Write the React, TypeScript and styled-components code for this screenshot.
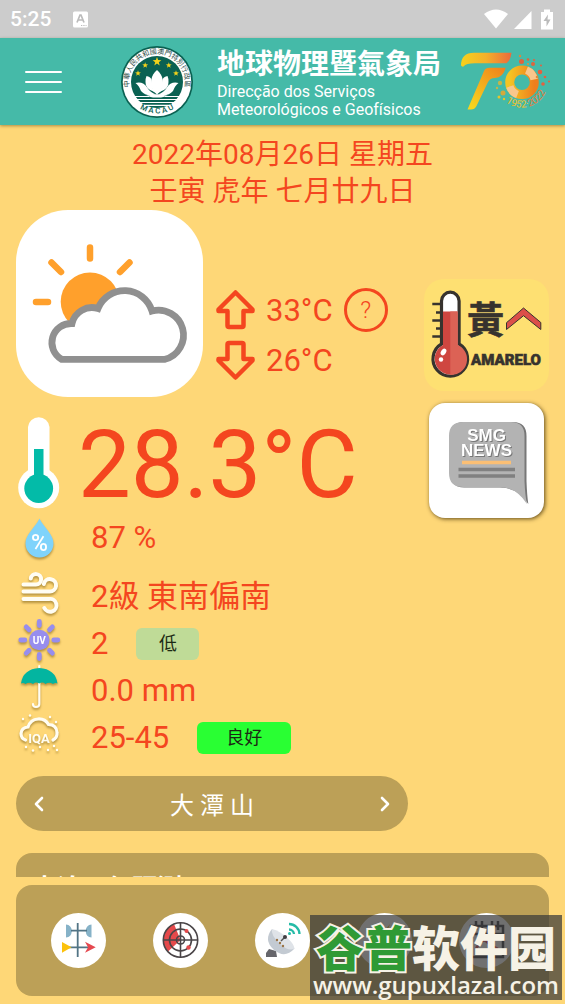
import React from "react";
import styled, { createGlobalStyle } from "styled-components";

const sans = `Roboto, "Noto Sans CJK TC", sans-serif`;

const palette = {
  teal: "#45baa8",
  sand: "#fed777",
  brown: "#bca057",
  accent: "#f4461f",
};

const GlobalStyle = createGlobalStyle`
  * { box-sizing: border-box; }
  body { margin: 0; background: ${palette.sand}; font-family: ${sans}; }
  button { font-family: inherit; border: 0; padding: 0; margin: 0; background: none; color: inherit; cursor: pointer; }
  h1, h2, p { margin: 0; }
  svg { display: block; flex: none; overflow: visible; }
`;

const Screen = styled.div`
  display: flex;
  flex-direction: column;
  height: 100vh;
  padding-bottom: 8px;
  overflow: hidden;
  position: relative;
`;

const StatusBar = styled.div`
  display: flex;
  align-items: center;
  flex: none;
  height: 38px;
  padding: 0 8px 0 10px;
  gap: 22px;
  background: #cccccc;
  color: #fff;
  font-size: 21px;
  font-weight: 500;
`;

const StatusIcons = styled.div`
  display: flex;
  align-items: center;
  gap: 4px;
  margin-left: auto;
`;

const Header = styled.header`
  display: flex;
  align-items: center;
  flex: none;
  height: 87px;
  padding: 0 14px 0 25px;
  background: ${palette.teal};
  color: #fff;
  box-shadow: 0 1px 3px rgba(90, 70, 20, 0.5);
  z-index: 1;
`;

const MenuButton = styled.button`
  display: flex;
  flex-direction: column;
  gap: 8px;
  width: 37px;
  margin-right: 59px;

  span {
    height: 2px;
    border-radius: 1px;
    background: #fff;
  }
`;

const Brand = styled.div`
  display: flex;
  align-items: center;
  gap: 24px;
`;

const BrandName = styled.h1`
  padding-top: 3px;
  font-size: 28px;
  line-height: 36px;
  font-weight: 700;
  white-space: nowrap;
`;

const BrandSub = styled.p`
  font-size: 16px;
  line-height: 18px;
  white-space: nowrap;
`;

const AnniversaryLogo = styled.svg`
  margin-left: auto;
`;

const Main = styled.main`
  flex: 1;
  min-height: 0;
  overflow: hidden;
  padding: 11px 16px 0;
  color: ${palette.accent};
`;

const DateLine = styled.p`
  font-size: 28px;
  line-height: 37px;
  text-align: center;
`;

const Columns = styled.div`
  display: grid;
  grid-template-columns: 1fr 125px;
  column-gap: 16px;
`;

const SideColumn = styled.div`
  display: flex;
  flex-direction: column;
  align-items: center;
  gap: 12px;
  padding-top: 69px;
`;

const Summary = styled.div`
  display: flex;
  align-items: flex-end;
  gap: 12px;
`;

const WeatherTile = styled.div`
  width: 187px;
  height: 187px;
  border-radius: 52px;
  background: #fff;
`;

const Extremes = styled.div`
  padding-bottom: 12px;
`;

const ExtremeRow = styled.div`
  display: flex;
  align-items: center;
  gap: 11px;
  height: 50px;
  font-size: 31px;
`;

const HelpButton = styled.button`
  width: 44px;
  height: 44px;
  border: 3px solid ${palette.accent};
  border-radius: 50%;
  color: ${palette.accent};
  font-size: 24px;
  font-weight: 300;
`;

const AlertButton = styled.button`
  width: 125px;
  height: 112px;
  border-radius: 20px;
  background: #fee072;
`;

const NewsButton = styled.button`
  width: 115px;
  height: 115px;
  border-radius: 16px;
  background: #fff;
  box-shadow: 1px 1px 4px rgba(60, 40, 0, 0.8);
`;

const Temperature = styled.div`
  display: flex;
  align-items: flex-start;
  gap: 18px;
  height: 98px;
  margin-top: 19px;
  padding-left: 2px;
  font-size: 94px;
  line-height: 98px;
  white-space: nowrap;
`;

const Readings = styled.div`
  display: flex;
  flex-direction: column;
  margin-bottom: 15px;
`;

const Reading = styled.div<{ $after?: number }>`
  display: flex;
  align-items: center;
  gap: 28px;
  height: 47px;
  margin-bottom: ${(p) => p.$after ?? 0}px;
  font-size: 31px;
  line-height: 47px;
  white-space: nowrap;

  svg {
    filter: drop-shadow(0 2px 1px rgba(110, 80, 10, 0.5));
  }
`;

const Badge = styled.span<{ $color: string; $width: number }>`
  width: ${(p) => p.$width}px;
  height: 32px;
  border-radius: 6px;
  background: ${(p) => p.$color};
  color: #1c2a14;
  font-size: 18px;
  line-height: 32px;
  text-align: center;
`;

const StationPicker = styled.div`
  display: flex;
  align-items: center;
  justify-content: space-between;
  height: 55px;
  padding: 0 16px;
  border-radius: 28px;
  background: ${palette.brown};
  color: #fff;
  font-size: 24px;
`;

const Forecast = styled.section`
  min-height: 120px;
  margin-top: 22px;
  padding: 18px 16px;
  border-radius: 16px;
  background: ${palette.brown};
  color: #fff;
`;

const ForecastTitle = styled.h2`
  font-size: 25px;
  line-height: 36px;
  font-weight: 700;
`;

const BottomNav = styled.nav`
  display: flex;
  align-items: center;
  justify-content: space-between;
  flex: none;
  height: 111px;
  margin: 8px 16px 0;
  padding: 0 35px;
  border-radius: 16px;
  background: ${palette.brown};
`;

const NavButton = styled.button`
  width: 55px;
  height: 55px;
  border-radius: 50%;
  background: #fff;
`;

const Watermark = styled.div`
  position: absolute;
  right: 3px;
  bottom: 4px;
  width: 252px;
  height: 85px;
  padding-top: 2px;
  background: rgba(57, 57, 57, 0.72);
  color: #f6f2e6;
  text-align: center;
  white-space: nowrap;
  pointer-events: none;
`;

const WatermarkName = styled.div`
  font-family: "Noto Sans CJK SC", sans-serif;
  font-size: 48px;
  line-height: 56px;
  font-weight: 900;

  span {
    color: #2f9a35;
    -webkit-text-stroke: 4px #f6f2e6;
    paint-order: stroke fill;
  }
`;

const WatermarkUrl = styled.div`
  font-family: "Open Sans", sans-serif;
  font-size: 24px;
  line-height: 24px;
  font-weight: 600;
`;

const star = (cx: number, cy: number, r: number) =>
  Array.from({ length: 10 }, (_, i) => {
    const radius = i % 2 ? r * 0.42 : r;
    const a = (Math.PI / 5) * i - Math.PI / 2;
    return `${(cx + radius * Math.cos(a)).toFixed(1)},${(cy + radius * Math.sin(a)).toFixed(1)}`;
  }).join(" ");

const Emblem = () => (
  <svg width="72" height="72" viewBox="0 0 72 72" aria-label="Macau">
    <defs>
      <path id="ringTop" d="M11.5 49.5 A28 28 0 1 1 60.5 49.5" />
      <path id="ringBottom" d="M10 54.5 A32.5 32.5 0 0 0 62 54.5" />
    </defs>
    <circle cx="36" cy="36" r="36" fill="#0a6152" />
    <circle cx="36" cy="36" r="34.3" fill="#fff" />
    <circle cx="36" cy="36" r="26" fill="#0a6152" />
    <text fontSize="7" fontWeight="400" fill="#27483f" fontFamily="Noto Sans CJK TC, sans-serif">
      <textPath href="#ringTop" startOffset="50%" textAnchor="middle">中華人民共和國澳門特別行政區</textPath>
    </text>
    <text fontSize="8" fontWeight="500" fill="#0a6152" fontFamily="Roboto, sans-serif">
      <textPath href="#ringBottom" startOffset="50%" textAnchor="middle">M A C A U</textPath>
    </text>
    <g fill="#f3d21b">
      <polygon points={star(36, 15.7, 4.6)} />
      <polygon points={star(24.2, 19.3, 3)} />
      <polygon points={star(47.8, 19.3, 3)} />
      <polygon points={star(17, 27.3, 3)} />
      <polygon points={star(55, 27.3, 3)} />
    </g>
    <g fill="#fff">
      <path d="M36 24 C42 29 43.5 36 40 45 L36 48.5 L32 45 C28.5 36 30 29 36 24Z" />
      <path d="M25.5 30 Q31 30.5 31 37 Q31 42 33.5 46 Q24 43 24.5 36 Q24.5 32 25.5 30Z" />
      <path d="M46.5 30 Q41 30.5 41 37 Q41 42 38.5 46 Q48 43 47.5 36 Q47.5 32 46.5 30Z" />
      <path d="M14.5 37 Q22 35 26.5 42 Q29 46 35 48.5 Q25 51 20 45 Q18 39.5 14.5 37Z" />
      <path d="M57.5 37 Q50 35 45.5 42 Q43 46 37 48.5 Q47 51 52 45 Q54 39.5 57.5 37Z" />
      <path d="M25 50 Q36 46.5 47 50 L40 51.5 H32Z" />
    </g>
    <path d="M12 50.5H28M44 50.5H60M15 53.5H57M18 56.5H54M23 59.3H49" stroke="#fff" strokeWidth="1.2" />
  </svg>
);

const dots: [number, number, number, string][] = [
  [60.5, 9.5, 2.5, "#e0643c"], [67, 7.5, 1.3, "#e0643c"], [72, 12, 2, "#e0643c"], [59, 4, 1.2, "#d98a3c"],
  [79, 20, 2.3, "#e5603f"], [73, 8, 1, "#e5603f"], [84, 25, 1.3, "#e5603f"], [82, 32, 1.8, "#e5603f"],
  [88, 29.5, 1, "#e5603f"], [80, 13.5, 1, "#e5603f"], [39, 31, 2.2, "#c4b548"], [36, 36, 1.2, "#c4b548"],
  [42, 41, 2.5, "#d3a93c"], [38, 45, 1.5, "#e3c62c"], [76, 25, 1.3, "#e08a3c"], [43, 47, 1.2, "#e3c62c"],
  [67, 12, 1, "#e0903c"],
];

const SeventyLogo = () => (
  <AnniversaryLogo width="90" height="60" viewBox="0 0 90 60" aria-label="70">
    <defs>
      <linearGradient id="barGrad" x1="0" x2="1"><stop offset="0" stopColor="#f6d21c" /><stop offset=".5" stopColor="#f4b02a" /><stop offset="1" stopColor="#ec6a3c" /></linearGradient>
      <linearGradient id="stemGrad" x1="1" y1="0" x2="0.2" y2="1"><stop offset="0" stopColor="#f07f1c" /><stop offset="1" stopColor="#f6d51f" /></linearGradient>
      <linearGradient id="ringGrad" x1="0" x2="1"><stop offset="0" stopColor="#f5c423" /><stop offset="1" stopColor="#ee7f1d" /></linearGradient>
      <path id="years" d="M44.5 50 A26 26 0 0 0 86.5 33 V20" />
    </defs>
    <path d="M0 13.5 Q0 .7 13 .7 H50.5 Q49.5 8.5 45.5 11.3 H14 Q5 11.3 2.5 14.5 Q1 15 0 13.5Z" fill="url(#barGrad)" />
    <path d="M44.7 15.7 Q42 25.7 34 25.9 Q28.5 26 26.5 31 L15.5 54 Q13.7 57.6 10 57.6 H6.5 L23 19 Q24.5 15.7 28.5 15.7Z" fill="url(#stemGrad)" />
    <circle cx="61" cy="30.3" r="12.3" fill="none" stroke="url(#ringGrad)" strokeWidth="9" />
    <path d="M65.5 18 A13 13 0 0 1 73.2 27.5M48.8 34.5 A13 13 0 0 0 56.5 42.6" fill="none" stroke="#f8c68c" strokeWidth="7.5" />
    {dots.map(([cx, cy, r, c]) => <circle key={`${cx}-${cy}`} cx={cx} cy={cy} r={r} fill={c} />)}
    <text fontSize="10" fill="#efc12c" fontFamily="Roboto, sans-serif">
      <textPath href="#years">1952·<tspan fill="#e87a3a">2022</tspan></textPath>
    </text>
  </AnniversaryLogo>
);

const WeatherArt = () => (
  <svg width="187" height="187" viewBox="0 0 187 187" aria-label="多雲">
    <circle cx="74" cy="91.7" r="29.3" fill="#ffa02c" />
    <path d="M74 37.5V48.5M35.500 52.500L45 62M113.500 52.500L104 62M20 92H32" stroke="#ffa02c" strokeWidth="6.5" strokeLinecap="round" />
    <path d="M45.5 149.3 A19.2 19.2 0 0 1 56 113.5 A20.5 20.5 0 0 1 82 98.500 A28.7 28.7 0 0 1 136 101 A24.6 24.6 0 1 1 149 149.3Z" fill="#fff" stroke="#909090" strokeWidth="6.800" />
  </svg>
);

const Arrow = ({ down = false }: { down?: boolean }) => (
  <svg width="40" height="40" viewBox="0 0 40 40" fill="none" stroke={palette.accent} strokeWidth="4.5" strokeLinejoin="round">
    {down
      ? <path d="M20.5 37.5 L37.5 20.5V19H28.5V4.5Q28.5 3 27 3H14Q12.5 3 12.5 4.5V19H3.5V20.5Z" />
      : <path d="M20.5 2.5 L37.5 19.5V21H28.5V35.5Q28.5 37 27 37H14Q12.5 37 12.5 35.5V21H3.5V19.5Z" />}
  </svg>
);

const AlertArt = () => (
  <svg width="125" height="112" viewBox="0 0 125 112">
    <path d="M8.3 25H18M12 33.5H18M8.3 41.5H18M12 49.5H18M8.3 57.5H18" stroke="#37332e" strokeWidth="2.5" />
    <path d="M17.5 22 A8.8 8.8 0 0 1 35.1 22 V65 A17.3 17.3 0 1 1 17.5 65Z" fill="#fff" stroke="#37332e" strokeWidth="3.2" />
    <path d="M19 32.5H33.6V66A15.6 15.6 0 1 1 19 66Z" fill="#cf4640" />
    <path d="M26.3 32.5H33.6V66A15.6 15.6 0 0 1 26.3 95.9Z" fill="#dc6255" />
    <ellipse cx="19.500" cy="73" rx="2.4" ry="3.6" transform="rotate(35 19.5 73)" fill="#fff" />
    <circle cx="17" cy="80.5" r="2.2" fill="#fff" />
    <text x="61.5" y="55" fontSize="37" fontWeight="700" textAnchor="middle" fill="#37332e" stroke="#37332e" strokeWidth=".6" fontFamily="Noto Sans CJK TC, sans-serif">黃</text>
    <path d="M82.5 43.7 99.5 29 116.8 43.5V50.5L99.5 36.7 82.5 50.5Z" fill="#dc4f49" stroke="#37332e" />
    <text x="82" y="86" fontSize="15" fontWeight="900" textAnchor="middle" fill="#37332e" stroke="#37332e" strokeWidth=".6" fontFamily="Roboto, sans-serif">AMARELO</text>
  </svg>
);

const NewsLettering = styled.g`
  filter: drop-shadow(1px 1px 0 #777);
`;

const NewsArt = () => (
  <svg width="115" height="115" viewBox="0 0 115 115">
    <path d="M35 19H84Q97.500 19 97.5 33V78Q98 92 99.3 101Q89 84.5 71 84.5H35Q21 84 21 70V33Q21 19 35 19Z" fill="#777" />
    <path d="M34 19H82Q95.5 19 95.5 33V78Q96 92 98 101Q87 84 70 84H34Q20 84 20 70V33Q20 19 34 19Z" fill="#b3b3b3" />
    <NewsLettering fontFamily="Liberation Sans, sans-serif" fontWeight="700" fontSize="17" textAnchor="middle" fill="#fff">
      <text x="57.5" y="37.5">SMG</text>
      <text x="57.5" y="52.5">NEWS</text>
    </NewsLettering>
    <path d="M33 59.5H82" stroke="#fbbf74" strokeWidth="3.5" />
    <path d="M29.5 66.5H86M29.5 73H86" stroke="#808080" strokeWidth="3.5" />
  </svg>
);

const Thermometer = () => (
  <svg width="42" height="92" viewBox="0 0 42 92">
    <path d="M10 11A10.8 10.8 0 0 1 31.5 11V55H10Z" fill="#fff" />
    <circle cx="20.7" cy="71.7" r="20.5" fill="#fff" />
    <path d="M16 33H25.5V65H16Z" fill="#03bba8" />
    <circle cx="20.7" cy="72.5" r="14.4" fill="#03bba8" />
  </svg>
);

const Drop = () => (
  <svg width="47" height="46" viewBox="0 0 47 46">
    <path d="M23.5 3.5C28 13 37.5 19 37.5 28.5A14 14 0 0 1 9.5 28.5C9.5 19 19 13 23.5 3.5Z" fill="#7fd3fb" />
    <text x="23.5" y="36" fontSize="23" fontWeight="500" textAnchor="middle" fill="#fff" fontFamily="Roboto, sans-serif">%</text>
  </svg>
);

const Wind = () => (
  <svg width="47" height="46" viewBox="0 2 47 46" fill="none" stroke="#fffdf3" strokeWidth="4" strokeLinecap="round">
    <path d="M7.500 12.500H20A5.200 5.200 0 1 0 14.800 6.500" />
    <path d="M7.500 19.500H33.500A6.200 6.200 0 1 0 27.800 12" />
    <path d="M7.500 27H33A6.400 6.400 0 1 1 28.300 36" />
  </svg>
);

const Ultraviolet = () => (
  <svg width="47" height="46" viewBox="0 3 47 46">
    <circle cx="23.3" cy="22" r="10.2" fill="#978dee" />
    {Array.from({ length: 8 }, (_, i) => (
      <path key={i} d="M23.3 3.5V7.5" stroke="#978dee" strokeWidth="4.8" strokeLinecap="round" transform={`rotate(${i * 45} 23.3 22)`} />
    ))}
    <text x="23.3" y="25.5" fontSize="10" fontWeight="700" textAnchor="middle" fill="#fff" fontFamily="Roboto, sans-serif">UV</text>
  </svg>
);

const Umbrella = () => (
  <svg width="47" height="46" viewBox="0 2 47 46">
    <path d="M23.3 0V38Q23.3 41 20 41Q17 41 17 38" fill="none" stroke="#fffdf3" strokeWidth="2.2" strokeLinecap="round" />
    <path d="M5 17.5Q7 3 23.3 2Q39.5 3 41.5 17.5Q39 16.5 37 18Q33 15.5 29.5 18Q26.5 15.5 23.3 17.5Q20 15.5 17 18Q13 15.5 9.5 18Q7.5 16.5 5 17.5Z" fill="#03b5a0" />
  </svg>
);

const AirQuality = () => (
  <svg width="47" height="46" viewBox="0 1 47 46">
    <path d="M9.5 26Q5 24.500 5 19.5Q5.5 13.5 12 13Q14.5 5.5 22 5Q29 4.5 32.5 10.5Q40.5 10.5 41 18.5Q41.5 23.5 37 26" fill="none" stroke="#fffdf3" strokeWidth="3.2" strokeLinecap="round" />
    <text x="23" y="28.5" fontSize="13" fontWeight="700" textAnchor="middle" fill="#fffdf3" fontFamily="Roboto, sans-serif">IQA</text>
    <g fill="#fffdf3">
      {[[7, 5], [14, 1.5], [34, 3], [40, 8], [10, 33], [17, 36.5], [24, 33], [32, 36], [38, 32], [41, 36]].map(([x, y]) => <circle key={x} cx={x} cy={y} r="1.2" />)}
    </g>
  </svg>
);

const Chevron = ({ right = false }: { right?: boolean }) => (
  <svg width="14" height="20" viewBox="0 0 14 20" fill="none" stroke="#fff" strokeWidth="2.6" strokeLinecap="round" strokeLinejoin="round">
    <path d={right ? "M4 4L10 10 4 16" : "M10 4L4 10 10 16"} />
  </svg>
);

const VaneArt = () => (
  <svg width="55" height="55" viewBox="0 0 55 55">
    <path d="M15 11.5Q20.5 12 20.8 18Q20.5 24 15 24.5ZM40.5 11.5Q35 12 34.7 18Q35 24 40.5 24.5Z" fill="#86b2c8" />
    <path d="M26.7 10V44M20 17.7H36M15 34.3H40" stroke="#527485" strokeWidth="1.8" />
    <path d="M11 29L20.5 34.3 11 39.7Z" fill="#fcc20d" />
    <path d="M44.7 34.3L34 28.8 37 34.3 34 39.8Z" fill="#e5484f" />
  </svg>
);

const RadarArt = () => (
  <svg width="55" height="55" viewBox="0 0 55 55" fill="none" stroke="#4a4548" strokeWidth="1.6">
    <path d="M27.500 27L21 11A17.2 17.2 0 0 0 15 38.500Z" fill="#e5494b" stroke="none" />
    <circle cx="27.5" cy="27" r="17.2" />
    <circle cx="27.5" cy="27" r="11" />
    <circle cx="27.5" cy="27" r="4" />
    <path d="M27.5 9.5V44.5M10 27H45" />
    <g fill="#e5494b" stroke="none"><circle cx="33.5" cy="18" r="2" /><circle cx="35.5" cy="34.5" r="2.2" /></g>
  </svg>
);

const DishArt = () => (
  <svg width="55" height="55" viewBox="0 0 55 55">
    <path d="M14 36L21 38 22 44H11V40Z" fill="#66666b" />
    <path d="M17 16Q8 27 19 37Q30 46 39.5 35.5Z" fill="#c3cad2" />
    <path d="M17 16Q25 18 32 24.500Q39 31 39.5 35.5Q34 39 25 31Q15.500 22 17 16Z" fill="#dfe3e8" />
    <path d="M26 28L30 24" stroke="#555" strokeWidth="1.5" />
    <circle cx="30" cy="24" r="2" fill="#403e42" />
    <g fill="#9b7445"><circle cx="22" cy="27" r="1.2" /><circle cx="25" cy="30" r="1.2" /><circle cx="28" cy="33" r="1.2" /></g>
    <path d="M34 16.5A5 5 0 0 1 39 21M34 11A10.5 10.5 0 0 1 44.5 21" fill="none" stroke="#25bba7" strokeWidth="2.3" />
    <circle cx="34.5" cy="20.5" r="1.5" fill="#25bba7" />
  </svg>
);

const BoltArt = () => (
  <svg width="55" height="55" viewBox="0 0 55 55"><path d="M33 11L18 29H27L23 43 37 24H28Z" fill="#f6b21b" /></svg>
);

const CalendarArt = () => (
  <svg width="55" height="55" viewBox="0 0 55 55" fill="none" stroke="#34343c" strokeWidth="2.5">
    <path d="M12 13H44V44H12ZM12 21H44M17 8V17M23 8V17M33 8V17M39 8V17" />
    <path d="M17 36Q23 24 28 29Q32 33 39 36" stroke="#d94550" />
  </svg>
);

const navItems = [
  { label: "氣象站", art: <VaneArt /> },
  { label: "雷達", art: <RadarArt /> },
  { label: "衛星", art: <DishArt /> },
  { label: "閃電", art: <BoltArt /> },
  { label: "日曆", art: <CalendarArt /> },
];

export default function App() {
  return (
    <>
      <GlobalStyle />
      <Screen>
        <StatusBar>
          <span>5:25</span>
          <svg width="16" height="17" viewBox="0 0 16 17">
            <rect width="15" height="16" y=".5" rx="1.5" fill="#fff" />
            <path d="M4 11.5L7 4H8L11 11.5M5.2 9H9.8" stroke="#bbb" strokeWidth="1.7" fill="none" />
            <path d="M8 14.5H13.5" stroke="#bbb" strokeDasharray="1.3 1" />
          </svg>
          <StatusIcons>
            <svg width="26" height="20" viewBox="0 0 26 20"><path d="M13 19.5L1 5Q13 -4 25 5Z" fill="#fff" /></svg>
            <svg width="20" height="19" viewBox="0 0 20 19"><path d="M1 19H18.5V1Z" fill="#fff" /></svg>
            <svg width="20" height="21" viewBox="0 0 20 21">
              <path d="M7 3V.5H13V3H16V20.5H4V3Z" fill="#fff" />
              <path d="M11 5.5L6.5 12H9.5V17.5L13.5 10.5H10.5Z" fill="#bbb" />
            </svg>
          </StatusIcons>
        </StatusBar>

        <Header>
          <MenuButton aria-label="選單"><span /><span /><span /></MenuButton>
          <Brand>
            <Emblem />
            <div>
              <BrandName>地球物理暨氣象局</BrandName>
              <BrandSub>Direcção dos Serviços</BrandSub>
              <BrandSub>Meteorológicos e Geofísicos</BrandSub>
            </div>
          </Brand>
          <SeventyLogo />
        </Header>

        <Main>
          <DateLine>2022年08月26日 星期五</DateLine>
          <DateLine>壬寅 虎年 七月廿九日</DateLine>
          <Columns>
            <div>
              <Summary>
                <WeatherTile><WeatherArt /></WeatherTile>
                <Extremes>
                  <ExtremeRow><Arrow /><span>33°C</span><HelpButton aria-label="說明">?</HelpButton></ExtremeRow>
                  <ExtremeRow><Arrow down /><span>26°C</span></ExtremeRow>
                </Extremes>
              </Summary>
              <Temperature><Thermometer /><span>28.3°C</span></Temperature>
              <Readings>
                <Reading $after={12}><Drop /><span>87 %</span></Reading>
                <Reading><Wind /><span>2級 東南偏南</span></Reading>
                <Reading><Ultraviolet /><span>2</span><Badge $color="#bfdb97" $width={63}>低</Badge></Reading>
                <Reading><Umbrella /><span>0.0 mm</span></Reading>
                <Reading><AirQuality /><span>25-45</span><Badge $color="#29ff33" $width={94}>良好</Badge></Reading>
              </Readings>
              <StationPicker>
                <button aria-label="上一個"><Chevron /></button>
                <span>大 潭 山</span>
                <button aria-label="下一個"><Chevron right /></button>
              </StationPicker>
            </div>
            <SideColumn>
              <AlertButton aria-label="黃色高溫警告"><AlertArt /></AlertButton>
              <NewsButton aria-label="SMG NEWS"><NewsArt /></NewsButton>
            </SideColumn>
          </Columns>
          <Forecast><ForecastTitle>本澳天氣預測</ForecastTitle></Forecast>
        </Main>

        <BottomNav>
          {navItems.map((item) => (
            <NavButton key={item.label} aria-label={item.label}>{item.art}</NavButton>
          ))}
        </BottomNav>

        <Watermark>
          <WatermarkName><span>谷普</span>软件园</WatermarkName>
          <WatermarkUrl>www.gupuxlazal.com</WatermarkUrl>
        </Watermark>
      </Screen>
    </>
  );
}
